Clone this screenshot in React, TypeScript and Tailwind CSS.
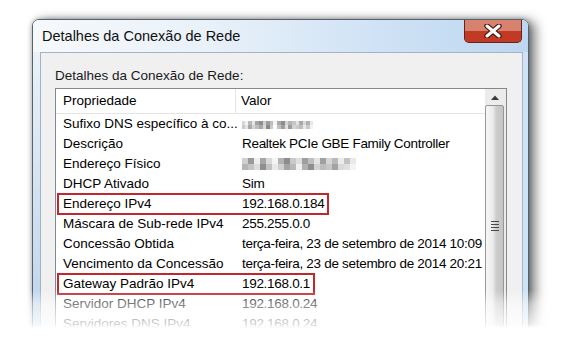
import React from 'react';

type Row = { prop: string; value?: string; mosaic?: 'dns' | 'mac'; boxed?: boolean };

const rows: Row[] = [
  { prop: 'Sufixo DNS específico à co...', mosaic: 'dns' },
  { prop: 'Descrição', value: 'Realtek PCIe GBE Family Controller' },
  { prop: 'Endereço Físico', mosaic: 'mac' },
  { prop: 'DHCP Ativado', value: 'Sim' },
  { prop: 'Endereço IPv4', value: '192.168.0.184', boxed: true },
  { prop: 'Máscara de Sub-rede IPv4', value: '255.255.0.0' },
  { prop: 'Concessão Obtida', value: 'terça-feira, 23 de setembro de 2014 10:09' },
  { prop: 'Vencimento da Concessão', value: 'terça-feira, 23 de setembro de 2014 20:21' },
  { prop: 'Gateway Padrão IPv4', value: '192.168.0.1', boxed: true },
  { prop: 'Servidor DHCP IPv4', value: '192.168.0.24' },
  { prop: 'Servidores DNS IPv4', value: '192.168.0.24' },
];

// pixelated (censored) values: [width, top colour, bottom colour]
const dnsBlocks: [number, string, string][] = [
  [3, '#d8d8d8', '#c9c9c9'], [3, '#f2f2f2', '#e4e4e4'], [4, '#b9b9b9', '#a9a9a9'], [3, '#e6e6e6', '#d6d6d6'],
  [4, '#a3a3a3', '#bcbcbc'], [4, '#8f8f8f', '#a7a7a7'], [3, '#cfcfcf', '#dcdcdc'], [4, '#9c9c9c', '#888888'],
  [3, '#bdbdbd', '#cacaca'], [4, '#f5f5f5', '#ffffff'], [4, '#a9a9a9', '#c2c2c2'], [4, '#8c8c8c', '#9e9e9e'],
  [3, '#d3d3d3', '#e1e1e1'], [4, '#b5b5b5', '#9d9d9d'], [4, '#c6c6c6', '#d4d4d4'], [3, '#e3e3e3', '#cbcbcb'],
  [4, '#aaaaaa', '#bebebe'], [3, '#d9d9d9', '#eaeaea'], [4, '#b0b0b0', '#c9c9c9'], [3, '#e8e8e8', '#f3f3f3'],
];

const macBlocks: [number, string, string][] = [
  [6, '#cfcfcf', '#b6b6b6'], [6, '#9a9a9a', '#c4c4c4'], [6, '#eeeeee', '#dddddd'], [6, '#a6a6a6', '#8f8f8f'],
  [6, '#d9d9d9', '#c2c2c2'], [6, '#f4f4f4', '#e9e9e9'], [6, '#b3b3b3', '#d0d0d0'], [6, '#8d8d8d', '#a4a4a4'],
  [6, '#c9c9c9', '#b8b8b8'], [6, '#dedede', '#f0f0f0'], [6, '#9e9e9e', '#b1b1b1'], [6, '#bfbfbf', '#8e8e8e'],
  [6, '#e4e4e4', '#d3d3d3'], [6, '#a0a0a0', '#bdbdbd'], [6, '#d6d6d6', '#c7c7c7'], [6, '#b9b9b9', '#a3a3a3'],
  [6, '#ececec', '#dadada'], [6, '#c3c3c3', '#e0e0e0'], [6, '#e9e9e9', '#f4f4f4'],
];

function Mosaic({ blocks, cell }: { blocks: [number, string, string][]; cell: number }) {
  return (
    <div className="flex">
      {blocks.map(([w, top, bottom], i) => (
        <div key={i} className="flex flex-col">
          <div style={{ width: w, height: cell, background: top }} />
          <div style={{ width: w, height: cell, background: bottom }} />
        </div>
      ))}
    </div>
  );
}

function CloseButton() {
  return (
    <div className="relative mr-[6px] h-[23px] w-[58px] shrink-0 self-start overflow-hidden rounded-b-[5px] border border-t-0 border-[#6a2119] bg-[#c4402a]">
      {/* glossy top half */}
      <div className="h-[11px] bg-[#d7826e]" />
      <div className="h-[12px] bg-[#c13a24]" />
      <svg className="absolute left-[19px] top-[4px]" width="18" height="14" viewBox="0 0 18 14">
        <path d="M3 2 L15 12 M15 2 L3 12" stroke="#4e1810" strokeWidth="5.5" strokeLinecap="round" />
        <path d="M3 2 L15 12 M15 2 L3 12" stroke="#ffffff" strokeWidth="3" strokeLinecap="round" />
      </svg>
    </div>
  );
}

function ScrollBar() {
  return (
    <div className="flex w-[21px] shrink-0 flex-col bg-[#ececec]">
      <div className="flex h-[21px] items-center justify-center pr-[1px]">
        <svg width="8" height="5" viewBox="0 0 8 5">
          <path d="M0 5 L4 0.5 L8 5 Z" fill="#3a3a3a" />
        </svg>
      </div>
      <div className="mr-[2px] flex h-[316px] items-center justify-center rounded-[2px] border border-[#979797] bg-[linear-gradient(to_right,#f7f7f7_0%,#ebebeb_40%,#cdcdcd_60%,#c4c4c4_100%)]">
        <div className="flex flex-col gap-[2px]">
          <div className="h-px w-[8px] bg-[#4a4a4a]" />
          <div className="h-px w-[8px] bg-[#4a4a4a]" />
          <div className="h-px w-[8px] bg-[#4a4a4a]" />
          <div className="h-px w-[8px] bg-[#4a4a4a]" />
        </div>
      </div>
    </div>
  );
}

function ListRow({ row }: { row: Row }) {
  const value = row.mosaic ? (
    row.mosaic === 'dns' ? (
      <div className="pt-[1px]"><Mosaic blocks={dnsBlocks} cell={4} /></div>
    ) : (
      <Mosaic blocks={macBlocks} cell={6} />
    )
  ) : (
    row.value
  );

  if (row.boxed) {
    return (
      <div className="flex h-[20px] items-center whitespace-nowrap">
        <div className="-my-px ml-[1px] flex h-[22px] items-center border-2 border-[#c1272d] pr-[3px]">
          <div className="w-[177px] pl-[4px]">{row.prop}</div>
          <div className="pl-[6px] tracking-[-0.3px]">{value}</div>
        </div>
      </div>
    );
  }

  return (
    <div className="flex h-[20px] items-center whitespace-nowrap">
      <div className="w-[180px] shrink-0 pl-[7px]">{row.prop}</div>
      <div className="flex items-center pl-[6px] tracking-[-0.3px]">{value}</div>
    </div>
  );
}

export default function App() {
  return (
    <div className="relative h-[340px] w-[562px] overflow-hidden bg-white font-['Liberation_Sans',Arial,sans-serif] text-[13.5px] leading-[16px] text-black">
      <div className="pl-[32px] pt-[19px]">
        <div className="flex h-[340px] w-[497px] flex-col overflow-hidden rounded-t-[7px] border border-[#56636f] shadow-[0_0_5px_rgba(0,0,0,0.3),6px_2px_12px_rgba(0,0,0,0.55)]">
          {/* Title bar */}
          <div className="flex h-[32px] shrink-0 items-start justify-between bg-[linear-gradient(to_right,#f6f9fc_0%,#e9f1f9_35%,#cfe2f5_70%,#bdd7f0_100%)]">
            <div className="pl-[9px] pt-[8px] text-[14.5px] text-[#111]">Detalhes da Conexão de Rede</div>
            <CloseButton />
          </div>

          {/* Frame + client area */}
          <div className="flex min-h-0 flex-1">
            <div className="w-[7px] shrink-0 bg-[linear-gradient(to_bottom,#eaf1f8,#b8d0ea)]" />
            <div className="min-w-0 flex-1 border border-b-0 border-[#a4b4c6] bg-[#f0f0f0] pl-[14px] pr-[15px] pt-[15px]">
              <div className="h-[20px] whitespace-nowrap text-[#1a1a1a]">Detalhes da Conexão de Rede:</div>
              <div className="flex h-[260px] border border-[#828790] bg-white">
                <div className="min-w-0 flex-1 overflow-hidden">
                  <div className="flex h-[25px] items-center border-b border-[#e5e5e5] whitespace-nowrap">
                    <div className="flex h-full w-[180px] shrink-0 items-center border-r border-[#e5e5e5] pl-[7px]">Propriedade</div>
                    <div className="pl-[5px]">Valor</div>
                  </div>
                  {rows.map((row) => (
                    <ListRow key={row.prop} row={row} />
                  ))}
                </div>
                <ScrollBar />
              </div>
            </div>
            <div className="w-[5px] shrink-0 bg-[#cfe2f6]" />
          </div>
        </div>
      </div>

      {/* bottom fade of the screenshot */}
      <div className="absolute left-0 top-[290px] h-[50px] w-full bg-[linear-gradient(to_bottom,rgba(255,255,255,0)_0%,rgba(255,255,255,0.5)_28%,rgba(255,255,255,0.82)_68%,#ffffff_76%)]" />
    </div>
  );
}
